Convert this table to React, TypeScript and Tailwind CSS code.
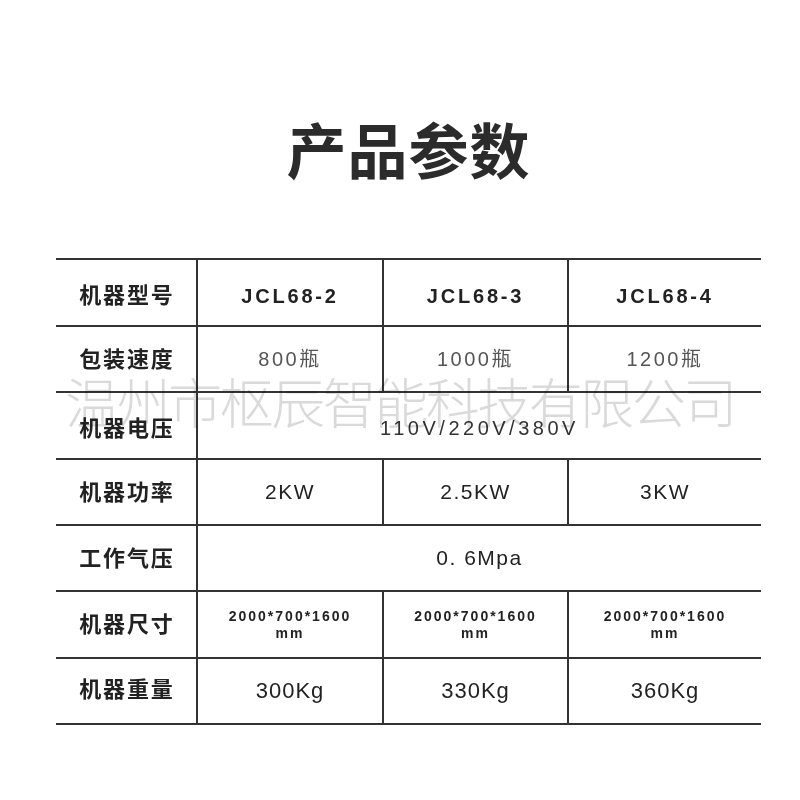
import React from "react";

const FONT = "font-['Liberation_Sans','Noto_Sans_CJK_SC',sans-serif]";

function Label({ children, extra = "" }: { children: React.ReactNode; extra?: string }) {
  return (
    <div className={`flex items-center justify-center text-[22px] font-bold tracking-[1.8px] text-[#222] ${extra}`}>
      <span className="mr-[-1.8px]">{children}</span>
    </div>
  );
}

function Cell({
  children,
  cls = "",
  span = false,
}: {
  children: React.ReactNode;
  cls?: string;
  span?: boolean;
}) {
  return (
    <div
      className={`flex items-center justify-center border-l-2 border-[#333] text-center ${span ? "col-span-3" : ""} ${cls}`}
    >
      {children}
    </div>
  );
}

export default function App() {
  const rowBase = "grid grid-cols-[140px_186px_185px_194px] border-t-2 border-[#333]";
  const norm = "text-[21px] tracking-[1.5px] text-[#222]";
  const bottle = "text-[20px] tracking-[2.5px] text-[#555]";
  const kg = "text-[22px] tracking-[1px] text-[#222]";
  const model = "text-[20px] font-bold tracking-[2.8px] text-[#222]";
  const size = "text-[14px] font-bold tracking-[2px] leading-[17px] text-[#222]";

  return (
    <div className={`relative w-[800px] h-[800px] bg-white overflow-hidden ${FONT}`}>
      <div className="ml-[56px] w-[705px] pt-[124px]">
        <h1 className="text-center text-[60px] leading-[60px] font-bold tracking-[1px] text-[#2b2b2b]">
          产品参数
        </h1>

        <div className="mt-[74px] border-b-2 border-[#333]">
          {/* Row 1 */}
          <div className={`${rowBase} h-[67px]`}>
            <Label extra="pt-[6px]">机器型号</Label>
            <Cell cls={`${model} pt-[6px]`}>JCL68-2</Cell>
            <Cell cls={`${model} pt-[6px]`}>JCL68-3</Cell>
            <Cell cls={`${model} pt-[6px]`}>JCL68-4</Cell>
          </div>
          {/* Row 2 */}
          <div className={`${rowBase} h-[66px]`}>
            <Label>包装速度</Label>
            <Cell cls={bottle}>800瓶</Cell>
            <Cell cls={bottle}>1000瓶</Cell>
            <Cell cls={bottle}>1200瓶</Cell>
          </div>
          {/* Row 3 */}
          <div className={`${rowBase} h-[67px]`}>
            <Label extra="pt-[5px]">机器电压</Label>
            <Cell span cls="text-[20px] tracking-[3.5px] text-[#333] pt-[5px]">
              110V/220V/380V
            </Cell>
          </div>
          {/* Row 4 */}
          <div className={`${rowBase} h-[66px]`}>
            <Label>机器功率</Label>
            <Cell cls={norm}>2KW</Cell>
            <Cell cls={norm}>2.5KW</Cell>
            <Cell cls={norm}>3KW</Cell>
          </div>
          {/* Row 5 */}
          <div className={`${rowBase} h-[66px]`}>
            <Label>工作气压</Label>
            <Cell span cls={norm}>
              0. 6Mpa
            </Cell>
          </div>
          {/* Row 6 */}
          <div className={`${rowBase} h-[67px]`}>
            <Label>机器尺寸</Label>
            <Cell cls={size}>
              <div>
                2000*700*1600
                <br />
                mm
              </div>
            </Cell>
            <Cell cls={size}>
              <div>
                2000*700*1600
                <br />
                mm
              </div>
            </Cell>
            <Cell cls={size}>
              <div>
                2000*700*1600
                <br />
                mm
              </div>
            </Cell>
          </div>
          {/* Row 7 */}
          <div className={`${rowBase} h-[66px]`}>
            <Label extra="pb-[4px]">机器重量</Label>
            <Cell cls={`${kg} pb-[2px]`}>300Kg</Cell>
            <Cell cls={`${kg} pb-[2px]`}>330Kg</Cell>
            <Cell cls={`${kg} pb-[2px]`}>360Kg</Cell>
          </div>
        </div>
      </div>

      {/* watermark */}
      <div className="pointer-events-none absolute left-0 right-0 top-[378px] text-center text-[54px] leading-[54px] font-light tracking-[-2.5px] text-[#dadada] mix-blend-multiply whitespace-nowrap">
        温州市枢辰智能科技有限公司
      </div>
    </div>
  );
}
